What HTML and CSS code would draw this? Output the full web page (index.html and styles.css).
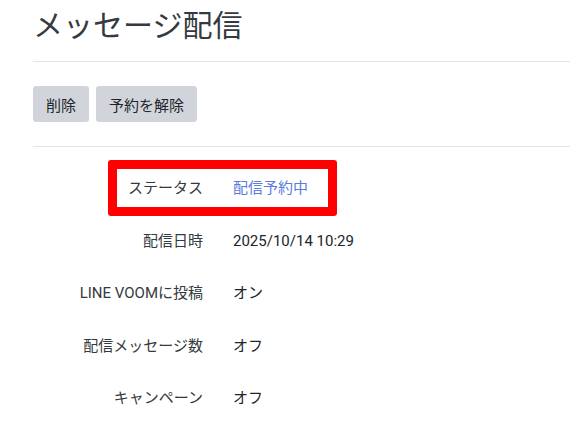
FILE: index.html
```html
<!DOCTYPE html>
<html lang="ja">
<head>
    <meta charset="UTF-8">
    <meta name="viewport" content="width=device-width, initial-scale=1.0">
    <title>メッセージ配信</title>
    <link rel="stylesheet" href="styles.css">
</head>
<body>
    <div class="page">
        <h1>メッセージ配信</h1>
        <hr class="divider">
        <div class="actions">
            <button class="btn">削除</button>
            <button class="btn">予約を解除</button>
        </div>
        <hr class="divider">
        <div class="details">
            <div class="row">
                <span class="highlight"></span>
                <div class="label">ステータス</div>
                <div class="value status">配信予約中</div>
            </div>
            <div class="row">
                <div class="label">配信日時</div>
                <div class="value">2025/10/14 10:29</div>
            </div>
            <div class="row">
                <div class="label">LINE VOOMに投稿</div>
                <div class="value">オン</div>
            </div>
            <div class="row">
                <div class="label">配信メッセージ数</div>
                <div class="value">オフ</div>
            </div>
            <div class="row">
                <div class="label">キャンペーン</div>
                <div class="value">オフ</div>
            </div>
        </div>
    </div>
</body>
</html>
```

FILE: styles.css
```css
body {
    margin: 0;
    font-family: Roboto, "Noto Sans CJK JP", sans-serif;
    color: #343a40;
    background: #ffffff;
    overflow: hidden;
}

.page {
    padding: 8px 0 0 33px;
}

h1 {
    margin: 0;
    font-size: 30px;
    font-weight: 400;
    line-height: 36px;
    color: #343a40;
}

.divider {
    margin: 17px 0 0;
    border: none;
    border-top: 1px solid #e2e5e8;
}

.actions {
    display: flex;
    gap: 7px;
    margin: 24px 0;
}

.btn {
    height: 36px;
    padding: 0 13px;
    border: none;
    border-radius: 3px;
    background-color: #d1d5db;
    color: #212529;
    font-family: inherit;
    font-size: 15px;
}

.actions + .divider {
    margin-top: 0;
}

.details {
    padding-top: 15px;
}

.row {
    position: relative;
    display: grid;
    grid-template-columns: 170px auto;
    column-gap: 30px;
    padding: 15px 0;
    font-size: 15px;
    line-height: 22.5px;
}

.label {
    text-align: right;
    color: #343a40;
}

.value {
    color: #212529;
}

.status {
    color: #5b7be0;
}

/* red annotation frame drawn over the first row */
.highlight {
    position: absolute;
    left: 75px;
    top: -2px;
    width: 229px;
    height: 56px;
    box-sizing: border-box;
    border: 9px solid #ff0000;
    border-radius: 3px;
}
```
